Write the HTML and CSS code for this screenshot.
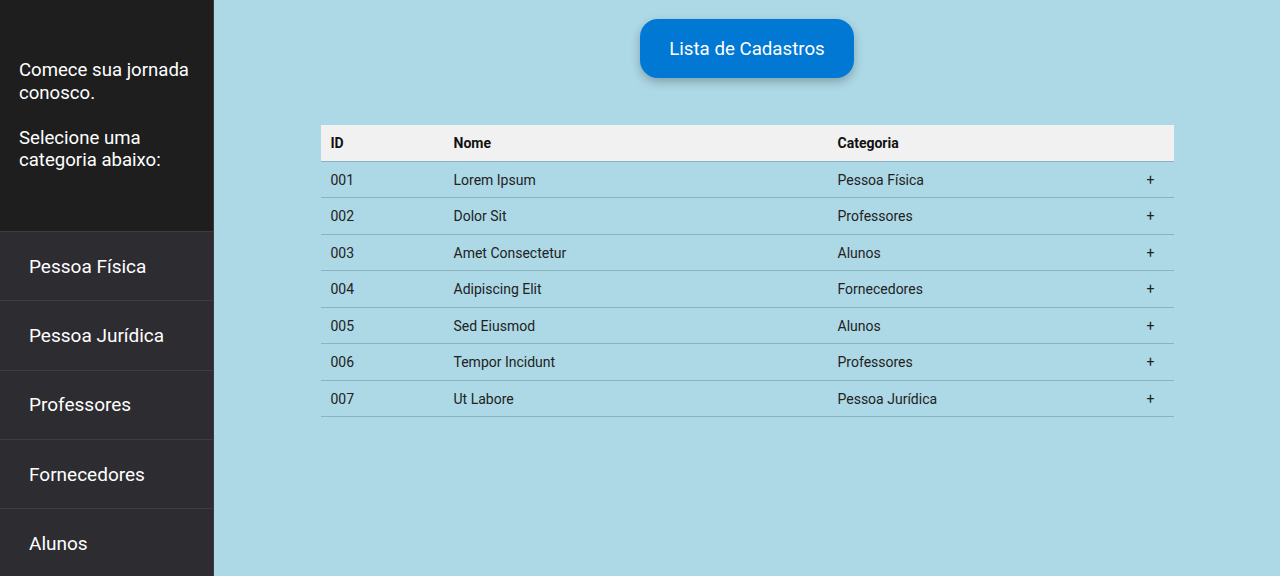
FILE: index.html
```html
<!DOCTYPE html>
<html lang="pt">
<head>
<meta charset="utf-8">
<title>Lista de Cadastros</title>
<link rel="stylesheet" href="styles.css">
</head>
<body>
<div class="app">
  <aside class="sidebar">
    <div class="intro">
      <p>Comece sua jornada conosco.</p>
      <p>Selecione uma categoria abaixo:</p>
    </div>
    <nav class="menu">
      <a class="menu-item">Pessoa Física</a>
      <a class="menu-item">Pessoa Jurídica</a>
      <a class="menu-item">Professores</a>
      <a class="menu-item">Fornecedores</a>
      <a class="menu-item">Alunos</a>
    </nav>
  </aside>
  <main class="content">
    <button class="title-btn">Lista de Cadastros</button>
    <table class="list">
      <colgroup>
        <col class="c-id"><col class="c-nome"><col class="c-cat"><col class="c-act">
      </colgroup>
      <thead>
        <tr><th>ID</th><th>Nome</th><th>Categoria</th><th></th></tr>
      </thead>
      <tbody>
        <tr><td>001</td><td>Lorem Ipsum</td><td>Pessoa Física</td><td>+</td></tr>
        <tr><td>002</td><td>Dolor Sit</td><td>Professores</td><td>+</td></tr>
        <tr><td>003</td><td>Amet Consectetur</td><td>Alunos</td><td>+</td></tr>
        <tr><td>004</td><td>Adipiscing Elit</td><td>Fornecedores</td><td>+</td></tr>
        <tr><td>005</td><td>Sed Eiusmod</td><td>Alunos</td><td>+</td></tr>
        <tr><td>006</td><td>Tempor Incidunt</td><td>Professores</td><td>+</td></tr>
        <tr><td>007</td><td>Ut Labore</td><td>Pessoa Jurídica</td><td>+</td></tr>
      </tbody>
    </table>
  </main>
</div>
</body>
</html>
```
FILE: styles.css
```css
* { box-sizing: border-box; }
html, body { margin: 0; padding: 0; height: 100%; }
body {
  font-family: Roboto, "Liberation Sans", Arial, sans-serif;
  background: #add8e6;
  overflow: hidden;
}
.app {
  display: flex;
  height: 576px;
  overflow: hidden;
}
.sidebar {
  width: 214px;
  flex: none;
  background: #1e1e1e;
  border-right: 1px solid #3c3c40;
  display: flex;
  flex-direction: column;
  color: #fff;
  overflow: hidden;
}
.intro {
  height: 231px;
  flex: none;
  padding: 59px 19px 0 19px;
  font-size: 18.6px;
  line-height: 22.5px;
}
.intro p { margin: 0 0 22.5px 0; }
.menu {
  display: flex;
  flex-direction: column;
  flex: 1;
  background: #2d2c31;
}
.menu-item {
  height: 69.3px;
  flex: none;
  display: flex;
  align-items: center;
  padding-left: 29px;
  font-size: 19px;
  color: #fff;
  border-top: 1px solid #3c3c41;
}
.content {
  flex: 1;
  display: flex;
  flex-direction: column;
  align-items: center;
  padding-top: 19px;
}
.title-btn {
  width: 214px;
  height: 59px;
  border: none;
  border-radius: 18px;
  background: #0078d4;
  color: #fff;
  font-family: inherit;
  font-size: 18.7px;
  box-shadow: 0 4px 10px rgba(0, 0, 0, 0.25);
}
.list {
  margin-top: 47px;
  width: 853px;
  border-collapse: collapse;
  font-size: 14px;
  color: #222;
}
.c-id { width: 123px; }
.c-nome { width: 384px; }
.c-cat { width: 309px; }
.list th {
  background: #f1f1f1;
  text-align: left;
  font-weight: 700;
  color: #111;
  height: 36px;
  padding: 0 10px;
  border-bottom: 1px solid #8ab2c0;
}
.list td {
  height: 36.5px;
  padding: 1px 10px 0 10px;
  border-bottom: 1px solid #8ab2c0;
}
```
